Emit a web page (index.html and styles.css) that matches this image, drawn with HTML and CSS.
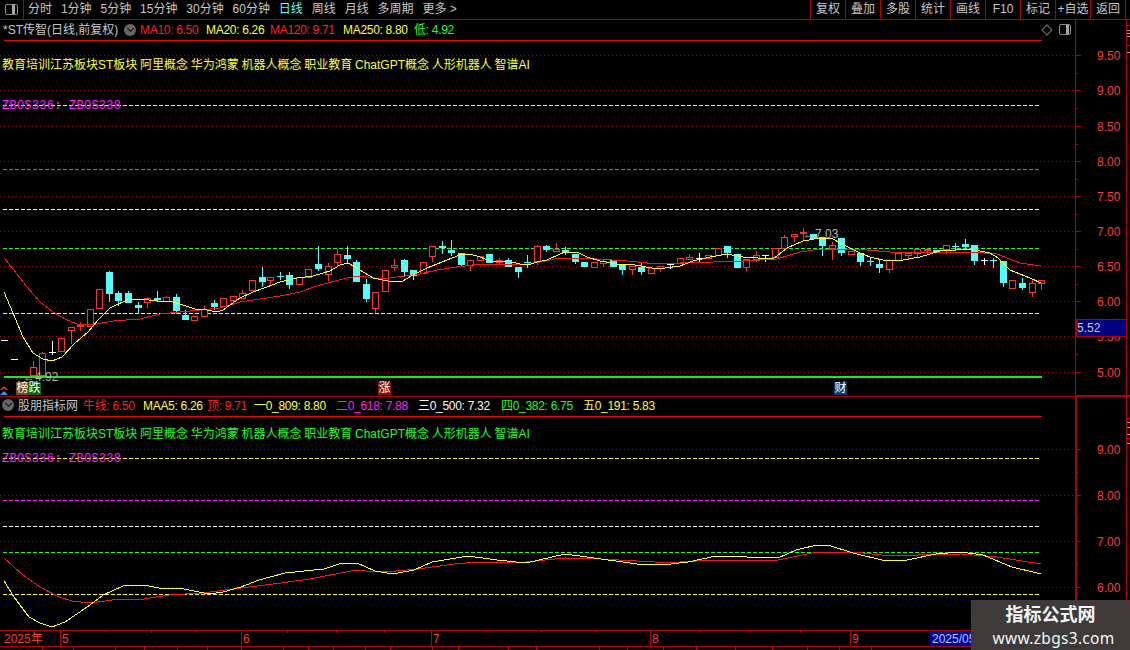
FILE: index.html
```html
<!DOCTYPE html>
<html lang="zh-CN">
<head>
  <meta charset="UTF-8" />
  <title>*ST传智 日线</title>
  <link rel="stylesheet" href="styles.css">
</head>
<body>
  <div class="app">
    <div class="toolbar">
      <div class="toggle-cell"><span class="toggle-icon"></span></div>
      <nav class="periods">
        <span>分时</span><span>1分钟</span><span>5分钟</span><span>15分钟</span><span>30分钟</span><span>60分钟</span>
        <span class="active">日线</span><span>周线</span><span>月线</span><span>多周期</span><span>更多 &gt;</span>
      </nav>
      <div class="tools">
        <span>复权</span><span>叠加</span><span>多股</span><span>统计</span><span>画线</span><span>F10</span><span>标记</span><span>+自选</span><span>返回</span>
      </div>
    </div>

    <section class="panel panel-main">
      <svg class="plot" id="main-plot" viewBox="0 20 1130 377" width="1130" height="377"></svg>
      <div class="legend">
        <span class="name">*ST传智(日线,前复权)</span>
        <span class="chevron"></span>
        <span class="red l-ma10">MA10: 6.50</span>
        <span class="yellow l-ma20">MA20: 6.26</span>
        <span class="red l-ma120">MA120: 9.71</span>
        <span class="yellow l-ma250">MA250: 8.80</span>
        <span class="green l-low">低: 4.92</span>
      </div>
      <div class="corner-icons">
        <span class="diamond"></span>
        <span class="toggle-icon"></span>
      </div>
      <svg class="signal-arrow" viewBox="0 0 8 9" width="8" height="9">
        <path d="M0 4 4 0 8 4H6L4 2 2 4Z" fill="#ff3030"/>
        <path d="M0 9 4 5 8 9Z" fill="#20a0ff"/>
      </svg>
      <span class="tag tag-bang">榜</span>
      <span class="tag tag-die">跌</span>
      <span class="tag tag-zhang">涨</span>
      <span class="tag tag-cai">财</span>
    </section>

    <section class="panel panel-sub">
      <svg class="plot" id="sub-plot" viewBox="0 397 1130 233" width="1130" height="233"></svg>
      <div class="legend legend-sub">
        <span class="chevron chevron-sub"></span>
        <span class="name l-src">股朋指标网</span>
        <span class="red l-a">牛线: 6.50</span>
        <span class="yellow l-b">MAA5: 6.26</span>
        <span class="red l-c">顶: 9.71</span>
        <span class="yellow l-d">一0_809: 8.80</span>
        <span class="magenta l-e">二0_618: 7.88</span>
        <span class="white l-f">三0_500: 7.32</span>
        <span class="green l-g">四0_382: 6.75</span>
        <span class="yellow l-h">五0_191: 5.83</span>
      </div>
    </section>

    <svg class="time-axis" id="time-axis" viewBox="0 630 1130 20" width="1130" height="20"></svg>

    <div class="watermark">
      <strong>指标公式网</strong>
      <span>www.zbgs3.com</span>
    </div>
  </div>
  <script src="chart.js"></script>
</body>
</html>
```

FILE: styles.css
```css
* {
  margin: 0;
  padding: 0;
  box-sizing: border-box;
}

body {
  background: #000;
  font-family: "Liberation Sans", "Noto Sans CJK SC", sans-serif;
  font-size: 12px;
  overflow: hidden;
}

.app {
  position: relative;
  display: flex;
  flex-direction: column;
  width: 1130px;
  height: 650px;
  overflow: hidden;
  background: #000;
  color: #c8c8c8;
}

/* top bar */
.toolbar {
  display: flex;
  align-items: stretch;
  height: 20px;
  border-bottom: 1px solid #b40000;
  line-height: 19px;
}

.toggle-cell {
  display: flex;
  align-items: center;
  justify-content: center;
  width: 24px;
  border-right: 1px solid #b40000;
}

.toggle-icon {
  display: block;
  width: 13px;
  height: 11px;
  border: 1px solid #8c8c8c;
  border-radius: 2px;
  background: linear-gradient(90deg, #000 55%, #a8a8a8 55%, #a8a8a8 85%, #000 85%);
}

.periods {
  display: flex;
  gap: 8.9px;
  margin-left: 4px;
}

.periods .active {
  color: #55ffff;
}

.tools {
  display: flex;
  margin-left: auto;
  margin-right: 4px;
  border-right: 1px solid #b40000;
}

.tools span {
  width: 35px;
  border-left: 1px solid #b40000;
  text-align: center;
  white-space: nowrap;
}

/* panels */
.panel {
  position: relative;
}

.panel-main {
  height: 377px;
}

.panel-sub {
  height: 233px;
}

.plot {
  position: absolute;
  top: 0;
  left: 0;
  display: block;
}

.legend {
  position: relative;
  height: 20px;
  line-height: 20px;
  white-space: nowrap;
}

.legend span {
  position: absolute;
  top: 0;
  letter-spacing: -0.3px;
}

.legend-sub {
  height: 18px;
  line-height: 18px;
}

.red { color: #ff2020; }
.yellow { color: #ffff30; }
.green { color: #20ff20; }
.magenta { color: #ff20ff; }
.white { color: #fff; }

.legend .name { left: 3px; letter-spacing: 0; }
.legend .l-src { left: 18px; }
.legend .l-ma10 { left: 140px; }
.legend .l-ma20 { left: 206px; }
.legend .l-ma120 { left: 270px; }
.legend .l-ma250 { left: 343px; }
.legend .l-low { left: 414px; }
.legend .l-a { left: 83px; }
.legend .l-b { left: 143px; }
.legend .l-c { left: 207px; }
.legend .l-d { left: 254px; }
.legend .l-e { left: 336px; }
.legend .l-f { left: 418px; }
.legend .l-g { left: 501px; }
.legend .l-h { left: 583px; }

.legend .chevron {
  top: 4px;
  left: 124px;
  width: 12px;
  height: 12px;
  border-radius: 50%;
  background: #666;
}

.legend .chevron-sub {
  top: 2px;
  left: 2px;
}

.chevron::after {
  content: "";
  position: absolute;
  top: 2px;
  left: 3.5px;
  width: 4px;
  height: 4px;
  border-right: 1.5px solid #111;
  border-bottom: 1.5px solid #111;
  transform: rotate(45deg);
}

.corner-icons {
  position: absolute;
  top: 4px;
  left: 1042px;
  display: flex;
  align-items: center;
  gap: 8px;
}

.diamond {
  width: 8px;
  height: 8px;
  margin-left: 1px;
  border: 1px solid #777;
  transform: rotate(45deg);
}

.corner-icons .toggle-icon {
  width: 12px;
}

.signal-arrow {
  position: absolute;
  top: 366px;
  left: 0;
}

.tag {
  position: absolute;
  top: 362px;
  width: 13px;
  height: 13px;
  line-height: 13px;
  color: #fff;
  text-align: center;
}

.tag-bang { left: 16px; background: #7a4a10; }
.tag-die { left: 28px; background: #0a6a10; }
.tag-zhang { left: 378px; background: #8a1010; }
.tag-cai { left: 834px; background: #0a3a70; }

/* things drawn into the svgs */
.grid {
  stroke: #a00000;
  stroke-dasharray: 1 3;
}

.dash {
  stroke-dasharray: 4 2;
}

.sep {
  stroke: #b40000;
}

.strong {
  stroke: #ff0000;
}

.solid-green {
  fill: #10f010;
}

.ma {
  fill: none;
}

.plot, .time-axis {
  shape-rendering: crispEdges;
}

.tick-label {
  fill: #ff3c3c;
  font-size: 12px;
}

.mono {
  fill: #ff20ff;
  font-family: "Liberation Mono", monospace;
  font-size: 12px;
  letter-spacing: 0.25px;
}

.topics {
  font-size: 12px;
  word-spacing: -0.6px;
}

.note {
  fill: #b4b4b4;
  font-size: 12px;
}

.price-now {
  fill: #c8c8c8;
  font-size: 12px;
}

.time-axis {
  display: block;
  flex: none;
}

.date-now {
  fill: #a8d0ff;
  font-size: 12px;
}

/* site mark over the corner */
.watermark {
  position: absolute;
  right: 0;
  bottom: 0;
  display: flex;
  flex-direction: column;
  align-items: center;
  width: 159px;
  height: 50px;
  padding-top: 3px;
  padding-left: 6px;
  background: #3e3a39;
  color: #f4f6fa;
}

.watermark strong {
  padding-right: 6px;
  font-size: 18px;
  line-height: 25px;
}

.watermark span {
  font-family: "Noto Sans", sans-serif;
  font-size: 15.5px;
  line-height: 20px;
  letter-spacing: 0.3px;
}
```

FILE: chart.js
```js
// x, kind, high, body top, body bottom, low (screen px)
const candles = [
  [4, 'w', 340, 340, 340, 340], [14, 'w', 359, 359, 359, 359],
  [33, 'r', 361, 367, 376, 376], [42, 'r', 352, 353, 376, 376], [52, 'w', 341, 352, 352, 354],
  [61, 'r', 337, 338, 352, 352], [71, 'r', 327, 327, 331, 343], [80, 'r', 322, 325, 327, 330],
  [90, 'r', 309, 309, 327, 327], [99, 'r', 289, 289, 309, 309], [109, 'c', 271, 272, 294, 301],
  [118, 'c', 291, 293, 301, 305], [128, 'c', 291, 293, 303, 303], [138, 'c', 302, 305, 308, 313],
  [147, 'r', 297, 298, 303, 307], [157, 'c', 291, 298, 300, 301], [166, 'r', 296, 297, 302, 302],
  [176, 'c', 294, 297, 311, 313], [185, 'c', 310, 315, 320, 320], [194, 'r', 316, 316, 321, 321],
  [204, 'r', 306, 309, 317, 317], [214, 'c', 300, 303, 307, 309], [223, 'r', 298, 298, 307, 307],
  [233, 'r', 296, 296, 301, 304], [242, 'r', 290, 293, 299, 299], [252, 'r', 280, 280, 291, 291],
  [262, 'c', 267, 277, 282, 286], [270, 'r', 277, 277, 281, 285], [280, 'c', 272, 276, 276, 279],
  [289, 'c', 272, 275, 285, 288], [299, 'r', 277, 277, 285, 285], [308, 'r', 269, 269, 278, 278],
  [318, 'c', 246, 264, 269, 270], [328, 'r', 263, 266, 275, 280], [337, 'r', 249, 254, 263, 265],
  [347, 'c', 246, 255, 259, 263], [356, 'c', 260, 262, 282, 282], [366, 'c', 279, 284, 299, 301],
  [375, 'r', 292, 292, 309, 312], [385, 'r', 270, 270, 292, 292], [394, 'r', 259, 265, 268, 270],
  [404, 'c', 259, 260, 272, 275], [413, 'c', 270, 270, 276, 279], [423, 'r', 262, 262, 274, 274],
  [432, 'r', 246, 246, 257, 261], [442, 'c', 241, 246, 248, 253], [451, 'c', 240, 250, 253, 255],
  [461, 'c', 253, 253, 265, 266], [470, 'r', 260, 260, 266, 270], [480, 'r', 256, 256, 261, 261],
  [489, 'c', 254, 254, 263, 263], [499, 'r', 258, 260, 263, 264], [508, 'c', 258, 260, 267, 267],
  [518, 'c', 267, 267, 272, 277], [527, 'c', 255, 262, 262, 267], [537, 'r', 245, 246, 262, 264],
  [546, 'c', 245, 246, 250, 251], [556, 'r', 243, 249, 252, 252], [565, 'c', 247, 250, 253, 254],
  [575, 'c', 254, 254, 262, 263], [584, 'c', 262, 262, 267, 267], [594, 'r', 262, 262, 268, 268],
  [603, 'r', 260, 261, 264, 266], [613, 'c', 260, 260, 267, 267], [622, 'c', 265, 265, 270, 274],
  [632, 'r', 266, 266, 270, 274], [641, 'c', 263, 267, 272, 274], [651, 'r', 267, 268, 274, 274],
  [660, 'r', 266, 266, 269, 271], [670, 'w', 263, 264, 264, 268], [680, 'r', 258, 258, 264, 264],
  [689, 'r', 254, 257, 260, 260], [699, 'w', 253, 258, 258, 262], [708, 'r', 255, 255, 259, 259],
  [718, 'r', 248, 248, 256, 256], [727, 'c', 246, 246, 253, 257], [737, 'c', 254, 254, 268, 268],
  [746, 'r', 259, 259, 268, 270], [756, 'r', 251, 255, 260, 261], [765, 'w', 255, 255, 255, 261],
  [775, 'r', 248, 248, 258, 258], [784, 'r', 235, 237, 249, 250], [794, 'r', 234, 234, 237, 241],
  [803, 'r', 228, 232, 234, 239], [813, 'c', 234, 234, 239, 239], [822, 'c', 237, 237, 246, 255],
  [832, 'r', 242, 245, 249, 259], [841, 'c', 238, 238, 253, 255], [851, 'r', 251, 251, 255, 255],
  [860, 'c', 253, 253, 262, 265], [870, 'c', 257, 261, 261, 265], [879, 'c', 259, 264, 268, 272],
  [889, 'r', 259, 260, 270, 272], [898, 'r', 253, 253, 261, 261], [908, 'r', 253, 253, 256, 258],
  [917, 'r', 249, 249, 254, 256], [927, 'r', 249, 249, 251, 254], [936, 'c', 250, 250, 253, 253],
  [946, 'r', 245, 245, 250, 253], [955, 'c', 243, 246, 246, 250], [965, 'c', 239, 244, 247, 249],
  [974, 'c', 245, 245, 261, 264], [984, 'w', 258, 260, 260, 264], [993, 'c', 258, 260, 260, 267],
  [1003, 'c', 261, 261, 283, 286], [1012, 'r', 280, 280, 289, 289], [1022, 'c', 278, 283, 288, 289],
  [1032, 'r', 279, 283, 293, 296], [1041, 'r', 280, 280, 284, 289]
];

// the moving averages were read off in screen px
const maRed = '4,258 13,269 27,287 40,302 53,312 67,320 80,325 97,324 113,321 140,319 160,314 180,312 200,310 220,308 240,302 260,299 280,296 300,292 320,285 347,278 360,276 383,279 397,277 420,274 437,270 457,267 480,264 513,264 527,264 540,262 560,258 580,258 597,259 627,261 647,263 667,264 693,262 713,262 743,261 777,259 790,255 800,252 820,249 847,249 867,250 890,252 970,252 997,254 1020,263 1041,266';
const maYellow = '4,292 13,313 23,337 33,353 43,359 52,361 62,357 75,343 88,332 98,320 110,308 127,300 140,299 157,301 170,301 183,305 195,309 207,310 217,312 223,310 240,298 253,292 267,287 280,282 297,278 313,276 330,271 340,265 348,263 360,270 373,278 393,282 403,281 413,275 427,268 447,260 460,255 470,254 480,257 490,261 507,261 520,264 528,265 537,262 547,260 560,254 565,252 577,252 587,257 600,261 617,264 635,265 652,268 665,268 680,266 693,261 710,257 727,254 743,257 773,259 787,248 803,241 820,238 833,239 840,243 860,253 870,257 887,261 903,260 920,257 940,251 970,249 990,253 998,258 1010,270 1030,278 1041,283';
const subRed = '4,558 23,575 40,587 59,597 72,601 90,603 112,600 144,599 169,595 202,593 241,588 281,583 310,579 346,572 357,570 375,572 396,571 418,569 454,564 479,562 526,562 565,558 601,559 655,562 680,562 713,560 778,560 817,552 853,552 882,555 918,555 961,554 997,557 1041,564';
const subYellow = '4,581 14,597 29,617 40,623 52,627 65,622 90,605 103,595 123,586 144,585 159,588 184,589 209,594 223,592 241,587 259,580 285,573 324,569 339,564 357,563 375,571 393,574 414,570 432,562 468,556 497,560 526,563 565,554 587,557 637,564 662,565 688,562 716,556 778,558 796,550 817,545 831,546 853,553 886,561 907,560 936,554 961,552 983,555 1012,567 1041,574';

function hline(y, x1, x2, cls, color) {
  const stroke = color ? ` stroke="${color}"` : '';
  return `<line x1="${x1}" x2="${x2}" y1="${y + 0.5}" y2="${y + 0.5}" class="${cls}"${stroke}/>`;
}

function vline(x, y1, y2, color) {
  return `<line x1="${x + 0.5}" x2="${x + 0.5}" y1="${y1}" y2="${y2}" stroke="${color}"/>`;
}

function candle(c) {
  const [x, kind, hi, top, bot, lo] = c;
  const color = { r: '#ff3232', c: '#54fcfc', w: '#ffffff' }[kind];
  let out = '';
  if (hi < top) out += vline(x, hi, top, color);
  if (lo > bot) out += vline(x, bot, lo + 1, color);
  if (top === bot) {
    out += hline(top, x - 3, x + 4, '', color);
  } else if (kind === 'c') {
    out += `<rect x="${x - 3}" y="${top}" width="7" height="${bot - top}" fill="${color}"/>`;
  } else {
    out += `<rect x="${x - 2.5}" y="${top + 0.5}" width="6" height="${bot - top - 1}" fill="#000" stroke="${color}"/>`;
  }
  return out;
}

function polyline(points, color) {
  return `<polyline class="ma" points="${points}" stroke="${color}"/>`;
}

function axisTicks(rows, minor) {
  let out = '';
  rows.forEach(([y, label]) => {
    out += hline(y, 1075, 1081, 'sep');
    out += `<text class="tick-label" x="1097" y="${y + 5}">${label}</text>`;
  });
  minor.forEach(y => { out += hline(y, 1075, 1078, 'sep'); });
  return out;
}

const topics = '教育培训江苏板块ST板块 阿里概念 华为鸿蒙 机器人概念 职业教育 ChatGPT概念 人形机器人 智谱AI';

function drawMain() {
  const grid = [55, 90, 126, 161, 196, 231, 266, 301, 336, 372];
  const labels = ['9.50', '9.00', '8.50', '8.00', '7.50', '7.00', '6.50', '6.00', '5.50', '5.00'];
  let s = '';
  grid.forEach(y => { s += hline(y, 0, 1075, 'grid'); });
  s += hline(40, 4, 1042, 'strong');
  s += hline(105, 3, 1040, 'dash', '#ffff30');
  s += hline(169, 3, 1040, 'dash', '#ff20ff');
  s += hline(209, 3, 1040, 'dash', '#ffffff');
  s += hline(248, 3, 1040, 'dash', '#20ff20');
  s += hline(313, 3, 1040, 'dash', '#ffff30');
  s += `<rect x="4" y="376" width="1038" height="2" class="solid-green"/>`;
  s += candles.map(candle).join('');
  s += polyline(maRed, '#ff1414');
  s += polyline(maYellow, '#ffff30');
  s += `<text class="topics" x="2" y="69" fill="#ffff30">${topics}</text>`;
  s += `<text class="mono" x="2" y="109">ZBOS336: ZBOS338</text>`;
  s += `<text class="note" x="23" y="381">←4.92</text>`;
  s += `<text class="note" x="803" y="238">←7.03</text>`;
  s += vline(1075, 20, 397, '#b40000');
  s += vline(1126, 0, 397, '#b40000');
  s += axisTicks(grid.map((y, i) => [y, labels[i]]), grid.slice(0, 9).map(y => y + 18));
  s += `<rect x="1076" y="319" width="50" height="17" fill="#000080" stroke="#b40000"/>`;
  s += `<text class="price-now" x="1077" y="332">5.52</text>`;
  // scroll marks in the thin strip on the far right
  [25, 45].forEach(y => { s += hline(y, 1127, 1130, 'sep'); });
  [30, 33, 36, 52].forEach(y => { s += hline(y, 1127, 1130, '', '#a0a0a0'); });
  s += hline(396, 0, 1075, 'sep');
  s += `<rect x="1075" y="395" width="55" height="2" fill="#b40000"/>`;
  document.getElementById('main-plot').innerHTML = s;
}

function drawSub() {
  const grid = [449, 495, 541, 587];
  const labels = ['9.00', '8.00', '7.00', '6.00'];
  let s = '';
  grid.forEach(y => { s += hline(y, 0, 1075, 'grid'); });
  s += hline(416, 4, 1042, 'strong');
  s += hline(458, 3, 1040, 'dash', '#ffff30');
  s += hline(500, 3, 1040, 'dash', '#ff20ff');
  s += hline(526, 3, 1040, 'dash', '#ffffff');
  s += hline(552, 3, 1040, 'dash', '#20ff20');
  s += hline(594, 3, 1040, 'dash', '#ffff30');
  s += polyline(subRed, '#ff1414');
  s += polyline(subYellow, '#ffff30');
  s += `<text class="topics" x="2" y="438" fill="#20ff20">${topics}</text>`;
  s += `<text class="mono" x="2" y="462">ZBOS336: ZBOS338</text>`;
  s += `<rect x="1075" y="397" width="2" height="233" fill="#b40000"/>`;
  s += vline(1126, 397, 630, '#b40000');
  s += axisTicks(grid.map((y, i) => [y, labels[i]]), [472, 518, 564, 610]);
  [418, 438].forEach(y => { s += hline(y, 1127, 1130, 'sep'); });
  [422, 427, 434, 443].forEach(y => { s += hline(y, 1127, 1130, '', '#a0a0a0'); });
  document.getElementById('sub-plot').innerHTML = s;
}

function drawTime() {
  const major = [[60, '5'], [241, '6'], [431, '7'], [650, '8'], [850, '9']];
  const upper = [105, 151, 196, 287, 336, 384, 486, 541, 596, 700, 750, 800];
  const lower = [42, 73, 115, 144, 177, 207, 241, 283, 308, 333, 365, 390, 432, 458, 508, 536, 599, 627, 663, 696, 735, 772, 807, 839, 871];
  let s = hline(630, 0, 1130, 'sep') + hline(646, 0, 1130, 'sep');
  s += `<text class="tick-label" x="4" y="643">2025年</text>`;
  major.forEach(([x, label]) => {
    s += vline(x, 630, 646, '#b40000');
    s += `<text class="tick-label" x="${x + 2}" y="643">${label}</text>`;
  });
  upper.forEach(x => { s += vline(x, 630, 633, '#b40000'); });
  lower.forEach(x => { s += vline(x, 646, 650, '#b40000'); });
  s += vline(1075, 630, 646, '#b40000') + vline(1126, 630, 650, '#b40000');
  s += `<rect x="930" y="631" width="41" height="15" fill="#0000a0"/>`;
  s += `<text class="date-now" x="932" y="643">2025/05</text>`;
  document.getElementById('time-axis').innerHTML = s;
}

drawMain();
drawSub();
drawTime();
```
